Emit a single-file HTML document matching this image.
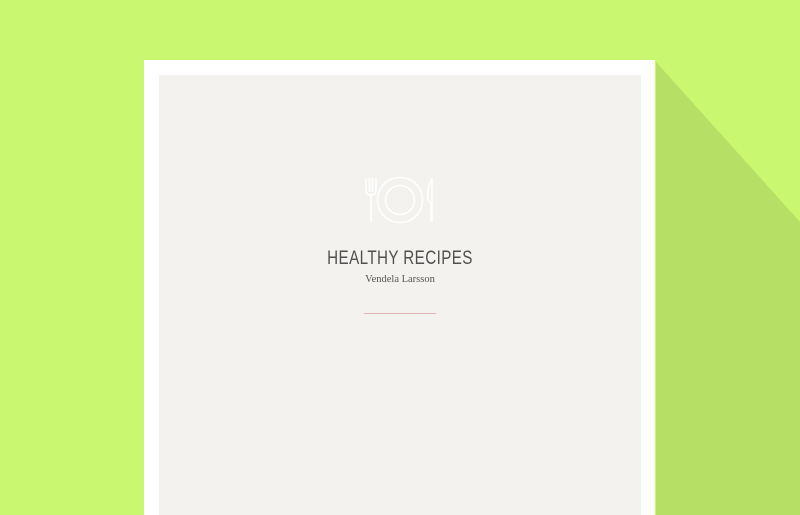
<!DOCTYPE html>
<html><head><style>
html,body{margin:0;padding:0;width:800px;height:515px;overflow:hidden}
body{background:#c9f76f;position:relative}
.frame{position:absolute;left:144px;top:60px;width:511px;height:455px;background:#fff}
.inner{position:absolute;left:159px;top:75px;width:482px;height:440px;background:#f3f2ef}
h1{position:absolute;left:0;width:800px;top:248px;margin:0;text-align:center;font:19px "Liberation Sans",sans-serif;letter-spacing:0.5px;color:#505050;font-weight:normal;transform:scaleX(0.8);transform-origin:400px 0}
.sub{position:absolute;left:0;width:800px;top:274px;text-align:center;font:10.5px "Liberation Serif",serif;color:#555}
.line{position:absolute;left:364px;top:313px;width:72px;height:1px;background:#e0b4b4}
</style></head><body>
<svg width="800" height="515" style="position:absolute;left:0;top:0"><polygon points="656,62 800,222 800,515 656,515" fill="#b6df66"/></svg>
<div class="frame"></div>
<div class="inner"></div>
<svg width="800" height="515" style="position:absolute;left:0;top:0" fill="none" stroke="#fff" stroke-width="1.6">
<path d="M366 178 V190 Q366 195 371 195 Q376 195 376 190 V178 M369.5 178 V192 M372.5 178 V192 M371 195 V222"/>
<circle cx="400" cy="200" r="22.5"/>
<circle cx="400" cy="200" r="14.5"/>
<path d="M432 178 Q427 188 428 200 L431 203 V222 M432 178 V222"/>
</svg>
<h1>HEALTHY RECIPES</h1>
<div class="sub">Vendela Larsson</div>
<div class="line"></div>
</body></html>
